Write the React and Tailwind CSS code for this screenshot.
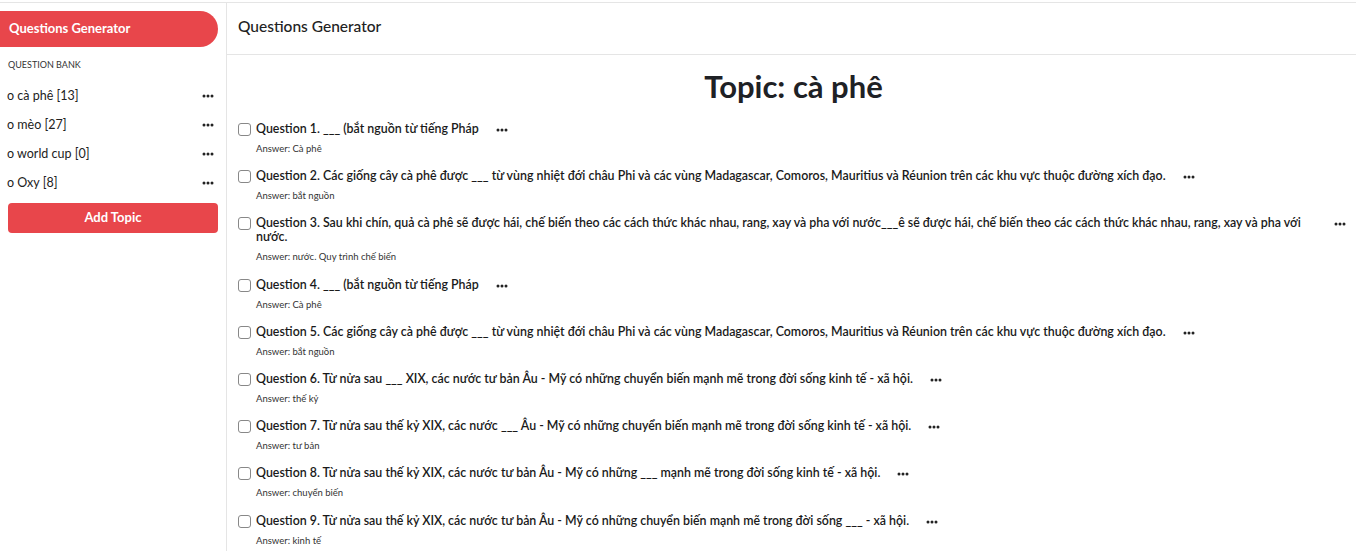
import React from "react";

const topics = [
  { name: "o cà phê [13]" },
  { name: "o mèo [27]" },
  { name: "o world cup [0]" },
  { name: "o Oxy [8]" },
];

const questions = [
  ["Question 1. ___ (bắt nguồn từ tiếng Pháp", "Cà phê"],
  ["Question 2. Các giống cây cà phê được ___ từ vùng nhiệt đới châu Phi và các vùng Madagascar, Comoros, Mauritius và Réunion trên các khu vực thuộc đường xích đạo.", "bắt nguồn"],
  ["Question 3. Sau khi chín, quả cà phê sẽ được hái, chế biến theo các cách thức khác nhau, rang, xay và pha với nước___ê sẽ được hái, chế biến theo các cách thức khác nhau, rang, xay và pha với nước.", "nước. Quy trình chế biến"],
  ["Question 4. ___ (bắt nguồn từ tiếng Pháp", "Cà phê"],
  ["Question 5. Các giống cây cà phê được ___ từ vùng nhiệt đới châu Phi và các vùng Madagascar, Comoros, Mauritius và Réunion trên các khu vực thuộc đường xích đạo.", "bắt nguồn"],
  ["Question 6. Từ nửa sau ___ XIX, các nước tư bản Âu - Mỹ có những chuyển biến mạnh mẽ trong đời sống kinh tế - xã hội.", "thế kỷ"],
  ["Question 7. Từ nửa sau thế kỷ XIX, các nước ___ Âu - Mỹ có những chuyển biến mạnh mẽ trong đời sống kinh tế - xã hội.", "tư bản"],
  ["Question 8. Từ nửa sau thế kỷ XIX, các nước tư bản Âu - Mỹ có những ___ mạnh mẽ trong đời sống kinh tế - xã hội.", "chuyển biến"],
  ["Question 9. Từ nửa sau thế kỷ XIX, các nước tư bản Âu - Mỹ có những chuyển biến mạnh mẽ trong đời sống ___ - xã hội.", "kinh tế"],
];

function Dots() {
  return (
    <svg width="12" height="4" viewBox="0 0 12 4" className="shrink-0 block">
      <circle cx="2" cy="2" r="1.5" fill="#222" />
      <circle cx="6" cy="2" r="1.5" fill="#222" />
      <circle cx="10" cy="2" r="1.5" fill="#222" />
    </svg>
  );
}

export default function App() {
  return (
    <div
      className="w-[1356px] h-[551px] overflow-hidden bg-white text-[#212529] mt-[2px] border-t border-[#e5e5e5] flex"
      style={{ fontFamily: 'Lato, "Noto Sans", sans-serif' }}
    >
      <aside className="w-[227px] shrink-0 border-r border-[#e5e5e5] pr-[8px]">
        <div className="mt-[8px] h-[36px] bg-[#e8464b] rounded-r-full flex items-center pl-[9px] w-[218px] text-white font-bold text-[13px]">
          Questions Generator
        </div>
        <div className="pl-[8px] mt-[11px] text-[9px] text-[#333]">QUESTION BANK</div>
        <div className="mt-[10px]">
          {topics.map((t) => (
            <div key={t.name} className="h-[29px] flex items-center justify-between pl-[7px] pr-[4px] text-[12.5px] text-[#222]">
              <span>{t.name}</span>
              <Dots />
            </div>
          ))}
        </div>
        <button className="ml-[8px] mt-[5px] w-[210px] h-[30px] rounded-[4px] bg-[#e8464b] text-white font-bold text-[13px] flex items-center justify-center">
          Add Topic
        </button>
      </aside>
      <main className="flex-1 min-w-0">
        <div className="h-[52px] border-b border-[#e5e5e5] flex items-center pl-[11px] pb-[3px] text-[15.5px] font-medium text-[#222]">
          Questions Generator
        </div>
        <h1 className="text-center text-[31px] font-bold text-[#1e2125] mt-[12px] leading-[38px] pl-[4px]">Topic: cà phê</h1>
        <div className="mt-[17px] pl-[11px] pr-[10px]">
          {questions.map(([q, a]) => (
            <div key={q} className="mb-[14.2px]">
              <div className="flex items-start">
                <span className="mt-[1px] w-[13px] h-[13px] shrink-0 border border-[#888] rounded-[3px] bg-white" />
                <span className="ml-[5px] text-[12.4px] font-semibold leading-[14px] text-[#1a1a1a]">{q}</span>
                <span className="ml-[17px] mt-[6px] shrink-0"><Dots /></span>
              </div>
              <div className="ml-[18px] mt-[7px] text-[9.5px] text-[#333] leading-[12px]">Answer: {a}</div>
            </div>
          ))}
        </div>
      </main>
    </div>
  );
}
